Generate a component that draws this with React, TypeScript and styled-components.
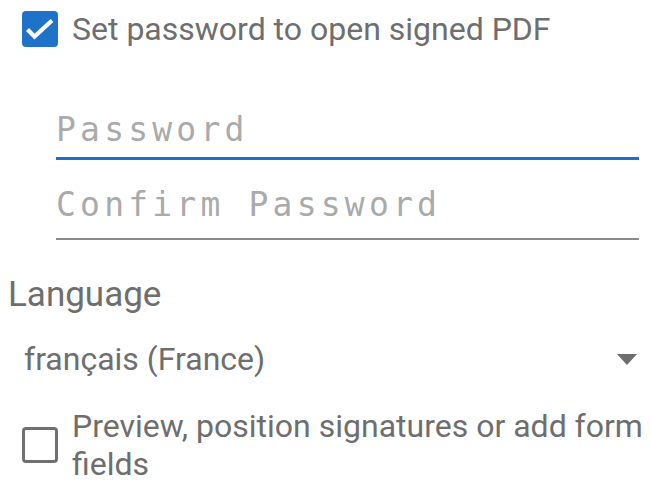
import React from "react";
import styled, { createGlobalStyle } from "styled-components";

const Global = createGlobalStyle`
  html, body { margin: 0; padding: 0; background: #ffffff; }
  body { font-family: Roboto, "Noto Sans", sans-serif; }
  * { box-sizing: border-box; }
`;

const Page = styled.div`
  width: 651px;
  height: 482px;
  overflow: hidden;
  display: flex;
  flex-direction: column;
  color: #6e6e6e;
`;

const CheckRow = styled.label<{ $top: number }>`
  display: flex;
  align-items: center;
  gap: 14px;
  margin-top: ${(p) => p.$top}px;
  padding: 0 2px 0 22px;
`;

const Box = styled.span<{ $checked?: boolean }>`
  flex: 0 0 36px;
  width: 36px;
  height: 36px;
  border-radius: 4px;
  display: flex;
  align-items: center;
  justify-content: center;
  background: ${(p) => (p.$checked ? "#1e73c8" : "transparent")};
  border: ${(p) => (p.$checked ? "none" : "3.5px solid #707070")};
`;

const CheckText = styled.span`
  font-size: 32px;
  line-height: 38px;
  color: #6e6e6e;
`;

const Fields = styled.div`
  margin-left: 56px;
  width: 583px;
  margin-top: 32px;
  display: flex;
  flex-direction: column;
`;

const Field = styled.div<{ $focused?: boolean }>`
  height: 80px;
  padding-top: ${(p) => (p.$focused ? 30 : 25)}px;
  border-bottom: ${(p) => (p.$focused ? "3px solid #1e6fc8" : "2px solid #8a8a8a")};
`;

const Input = styled.input`
  display: block;
  width: 100%;
  height: 40px;
  line-height: 40px;
  border: none;
  outline: none;
  padding: 0;
  margin: 0;
  background: transparent;
  font-family: "DejaVu Sans Mono", monospace;
  font-size: 33px;
  letter-spacing: 4.2px;
  color: #6e6e6e;
  &::placeholder {
    color: #aaaaaa;
    opacity: 1;
  }
`;

const SectionLabel = styled.div`
  margin-top: 35px;
  padding-left: 8px;
  font-size: 35px;
  line-height: 40px;
`;

const Select = styled.div`
  margin-top: 25px;
  display: flex;
  align-items: center;
  justify-content: space-between;
  padding: 0 14px 0 24px;
  height: 38px;
`;

const SelectValue = styled.span`
  font-size: 32px;
  line-height: 38px;
`;

const Caret = styled.svg`
  width: 20px;
  height: 11px;
  display: block;
`;

export default function App() {
  return (
    <>
      <Global />
      <Page>
        <CheckRow $top={10}>
          <Box $checked>
            <svg width="36" height="36" viewBox="0 0 36 36">
              <polyline
                points="5.5,18.5 12.5,25.5 30,9.5"
                fill="none"
                stroke="#ffffff"
                strokeWidth="4.2"
              />
            </svg>
          </Box>
          <CheckText>Set password to open signed PDF</CheckText>
        </CheckRow>
        <Fields>
          <Field $focused>
            <Input type="password" placeholder="Password" />
          </Field>
          <Field>
            <Input type="password" placeholder="Confirm Password" />
          </Field>
        </Fields>
        <SectionLabel>Language</SectionLabel>
        <Select>
          <SelectValue>français (France)</SelectValue>
          <Caret viewBox="0 0 20 11">
            <polygon points="0,0 20,0 10,11" fill="#6e6e6e" />
          </Caret>
        </Select>
        <CheckRow $top={29}>
          <Box />
          <CheckText>Preview, position signatures or add form fields</CheckText>
        </CheckRow>
      </Page>
    </>
  );
}
